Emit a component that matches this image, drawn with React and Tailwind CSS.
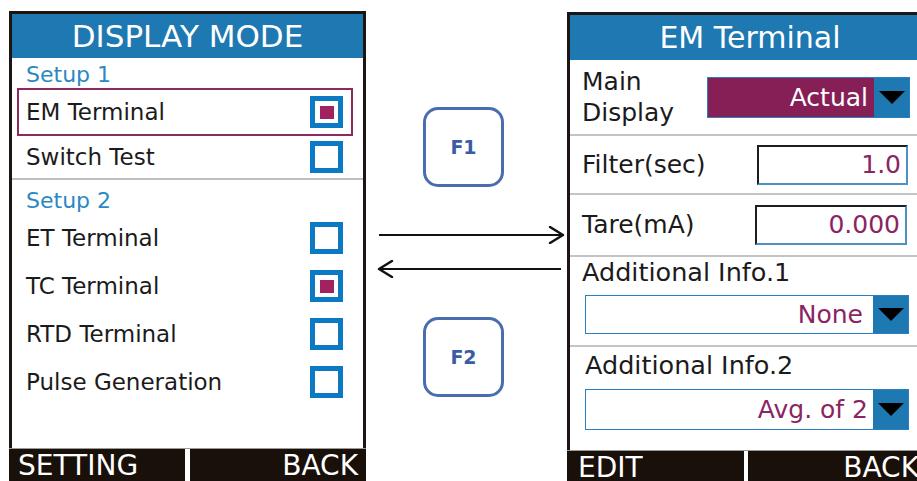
import React from "react";

const FONT = { fontFamily: '"DejaVu Sans", Verdana, sans-serif' };

function Check({ on }) {
  return (
    <div className="w-[33px] h-[32px] border-[5px] border-[#0b79c4] flex items-center justify-center shrink-0 bg-white">
      {on && <div className="w-[14px] h-[13px] bg-[#a2215f]" />}
    </div>
  );
}

function Row({ label, on }) {
  return (
    <div className="h-[48px] pl-[14px] pr-[20px] flex items-center justify-between">
      <span className="text-[23px] text-[#1b1b1b] leading-[28px]">{label}</span>
      <Check on={on} />
    </div>
  );
}

function Arrow() {
  return (
    <div className="w-[35px] h-full bg-[#1e78b1] flex items-center justify-center shrink-0">
      <div className="w-0 h-0 border-l-[13px] border-r-[13px] border-t-[13px] border-l-transparent border-r-transparent border-t-black" />
    </div>
  );
}

function FButton({ label }) {
  return (
    <div className="ml-[57px] w-[81px] h-[80px] rounded-[15px] border-[3px] border-[#4a6db0] flex items-center justify-center">
      <span className="text-[19px] font-bold text-[#3a5ca6]">{label}</span>
    </div>
  );
}

export default function App() {
  return (
    <div className="w-[917px] h-[481px] overflow-hidden bg-white flex items-start" style={FONT}>
      {/* Left panel */}
      <div className="ml-[9px] mt-[11px] w-[357px] shrink-0 flex flex-col">
        <div className="h-[437px] border-[3px] border-b-0 border-[#1c1512] flex flex-col bg-white">
          <div className="h-[44px] bg-[#1e78b1] text-white text-[31px] leading-[44px] text-center">
            DISPLAY MODE
          </div>
          <div className="h-[30px] pt-[4px] pl-[14px] text-[22px] leading-[26px] text-[#2b88c3]">Setup 1</div>
          <div className="h-[48px] ml-[5px] mr-[10px] border-2 border-[#8c2a5e] pl-[7px] pr-[8px] flex items-center justify-between">
            <span className="text-[23px] text-[#1b1b1b] leading-[28px]">EM Terminal</span>
            <Check on />
          </div>
          <div className="h-[44px] pl-[14px] pr-[20px] flex items-center justify-between border-b-2 border-[#bfbfbf]">
            <span className="text-[23px] text-[#1b1b1b] leading-[28px]">Switch Test</span>
            <Check />
          </div>
          <div className="h-[34px] pt-[8px] pl-[14px] text-[22px] leading-[26px] text-[#2b88c3]">Setup 2</div>
          <Row label="ET Terminal" />
          <Row label="TC Terminal" on />
          <Row label="RTD Terminal" />
          <Row label="Pulse Generation" />
          <div className="flex-1" />
        </div>
        <div className="h-[40px] flex gap-[5px] bg-white border-t border-[#9a9a9a]">
          <div className="w-[176px] bg-[#1a100a] text-white text-[28px] leading-[28px] pt-[3px] pl-[9px]">SETTING</div>
          <div className="flex-1 bg-[#1a100a] text-white text-[28px] leading-[28px] pt-[3px] pr-[8px] text-right">BACK</div>
        </div>
      </div>

      {/* Middle */}
      <div className="w-[201px] shrink-0 flex flex-col">
        <div className="mt-[107px]">
          <FButton label="F1" />
        </div>
        <svg className="mt-[39px] ml-[13px]" width="188" height="18" viewBox="0 0 188 18">
          <line x1="0" y1="9" x2="184" y2="9" stroke="#111" strokeWidth="2.2" />
          <polyline points="171,1 184,9 171,17" fill="none" stroke="#111" strokeWidth="2.4" strokeLinecap="round" strokeLinejoin="round" />
        </svg>
        <svg className="mt-[16px] ml-[11px]" width="188" height="18" viewBox="0 0 188 18">
          <line x1="2" y1="9" x2="184" y2="9" stroke="#111" strokeWidth="2.2" />
          <polyline points="15,1 2,9 15,17" fill="none" stroke="#111" strokeWidth="2.4" strokeLinecap="round" strokeLinejoin="round" />
        </svg>
        <div className="mt-[39px]">
          <FButton label="F2" />
        </div>
      </div>

      {/* Right panel */}
      <div className="mt-[12px] w-[366px] shrink-0 flex flex-col">
        <div className="h-[438px] border-[3px] border-b-0 border-[#1c1512] flex flex-col bg-white">
          <div className="h-[45px] bg-[#1e78b1] text-white text-[30px] leading-[45px] text-center">EM Terminal</div>
          {/* Main Display */}
          <div className="h-[76px] border-b-2 border-[#c4c4c4] pl-[12px] pr-[20px] flex items-center justify-between">
            <div className="text-[25px] leading-[31px] text-[#1b1b1b]">
              <div>Main</div>
              <div>Display</div>
            </div>
            <div className="w-[203px] h-[41px] border border-[#2a7fbf] flex">
              <div className="flex-1 bg-[#861f55] text-white text-[25px] leading-[39px] text-right pr-[6px]">Actual</div>
              <Arrow />
            </div>
          </div>
          {/* Filter */}
          <div className="h-[59px] border-b-2 border-[#c4c4c4] pl-[12px] pr-[22px] flex items-center justify-between">
            <span className="text-[25px] leading-[30px] text-[#1b1b1b]">Filter(sec)</span>
            <div className="w-[151px] h-[40px] border-2 border-t-[#1d1d1d] border-l-[#1d1d1d] border-r-[#4b92c9] border-b-[#4b92c9] text-right pr-[5px] text-[25px] leading-[36px] text-[#8a2563]">
              1.0
            </div>
          </div>
          {/* Tare */}
          <div className="h-[62px] border-b-2 border-[#c4c4c4] pl-[12px] pr-[23px] flex items-center justify-between">
            <span className="text-[25px] leading-[30px] text-[#1b1b1b]">Tare(mA)</span>
            <div className="w-[152px] h-[40px] border-2 border-t-[#1d1d1d] border-l-[#1d1d1d] border-r-[#4b92c9] border-b-[#4b92c9] text-right pr-[5px] text-[25px] leading-[36px] text-[#8a2563]">
              0.000
            </div>
          </div>
          {/* Additional Info.1 */}
          <div className="h-[90px] border-b-2 border-[#c4c4c4] flex flex-col">
            <div className="pl-[12px] text-[25.5px] leading-[30px] text-[#1b1b1b]">Additional Info.1</div>
            <div className="mt-[8px] ml-[15px] w-[324px] h-[39px] border border-[#2a7fbf] flex">
              <div className="flex-1 bg-white text-[25px] leading-[37px] text-right pr-[10px] text-[#8a2563]">None</div>
              <Arrow />
            </div>
          </div>
          {/* Additional Info.2 */}
          <div className="flex-1 flex flex-col">
            <div className="pt-[3px] pl-[15px] text-[25.5px] leading-[30px] text-[#1b1b1b]">Additional Info.2</div>
            <div className="mt-[9px] ml-[15px] w-[324px] h-[41px] border border-[#2a7fbf] flex">
              <div className="flex-1 bg-white text-[25px] leading-[39px] text-right pr-[5px] text-[#8a2563]">Avg. of 2</div>
              <Arrow />
            </div>
          </div>
        </div>
        <div className="h-[40px] flex gap-[4px] bg-white border-t border-[#9a9a9a]">
          <div className="w-[177px] bg-[#1a100a] text-white text-[28px] leading-[28px] pt-[3px] pl-[11px]">EDIT</div>
          <div className="flex-1 bg-[#1a100a] text-white text-[28px] leading-[28px] pt-[3px] pr-[14px] text-right">BACK</div>
        </div>
      </div>
    </div>
  );
}
